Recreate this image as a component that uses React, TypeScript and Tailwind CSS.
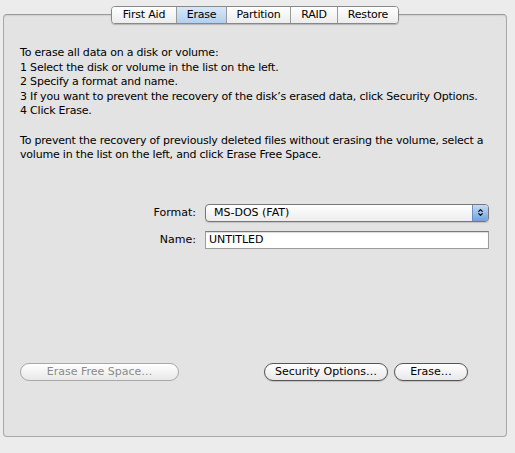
import { ChevronDown, ChevronUp } from "lucide-react";

const font = { fontFamily: '"DejaVu Sans", "Liberation Sans", sans-serif' };

function Tab({ label, active, first, w }: { label: string; active?: boolean; first?: boolean; w: string }) {
  return (
    <div
      className={`flex h-full items-center justify-center ${w} ${first ? "" : "border-l border-[#9a9a9a]"} ${
        active ? "bg-gradient-to-b from-[#d8e8f9] to-[#b3cfee] text-black" : "bg-gradient-to-b from-[#ffffff] to-[#ececec] text-black"
      }`}
    >
      {label}
    </div>
  );
}

function PillButton({ children, disabled, className }: { children: React.ReactNode; disabled?: boolean; className?: string }) {
  return (
    <div
      className={`flex h-[18px] items-center justify-center rounded-full border bg-gradient-to-b from-[#ffffff] to-[#e8e8e8] text-[11px] ${
        disabled ? "border-[#a8a8a8] text-[#8a8a8a] from-[#f4f4f4] to-[#e4e4e4]" : "border-[#555] text-black shadow-[0_1px_1px_rgba(0,0,0,0.15)]"
      } ${className ?? ""}`}
    >
      {children}
    </div>
  );
}

export default function App() {
  return (
    <div className="h-[453px] w-[515px] bg-[#ececec] pt-[14px] pl-[3px]" style={font}>
      <div className="relative flex h-[423px] w-[504px] flex-col rounded-[4px] border border-[#a9a9a9] border-t-[#999] bg-[#e3e3e3] shadow-[inset_0_1px_1px_rgba(0,0,0,0.08)]">
        {/* tab bar, sits across the top border */}
        <div className="absolute left-[107px] top-[-9px] flex h-[18px] overflow-hidden rounded-[4px] border border-[#888] text-[11px] tracking-[-0.2px] shadow-[0_1px_1px_rgba(0,0,0,0.2)]">
          <Tab label="First Aid" first w="w-[64px]" />
          <Tab label="Erase" active w="w-[50px]" />
          <Tab label="Partition" w="w-[64px]" />
          <Tab label="RAID" w="w-[47px]" />
          <Tab label="Restore" w="w-[61px]" />
        </div>

        <div className="pl-[16px] pt-[31px] text-[11px] leading-[14.6px] tracking-[-0.2px] text-black">
          <p>To erase all data on a disk or volume:</p>
          <p>1 Select the disk or volume in the list on the left.</p>
          <p>2 Specify a format and name.</p>
          <p>3 If you want to prevent the recovery of the disk’s erased data, click Security Options.</p>
          <p>4 Click Erase.</p>
          <p className="mt-[14.6px]">
            To prevent the recovery of previously deleted files without erasing the volume, select a
            <br />
            volume in the list on the left, and click Erase Free Space.
          </p>
        </div>

        <div className="mt-[41px] grid grid-cols-[192px_284px] items-center gap-x-[9px] gap-y-[9px] text-[11px]">
          <div className="text-right">Format:</div>
          <div className="flex h-[18px] items-center overflow-hidden rounded-[4px] border border-[#777] bg-gradient-to-b from-[#ffffff] to-[#ececec] shadow-[0_1px_1px_rgba(0,0,0,0.15)]">
            <span className="flex-1 pl-[8px]">MS-DOS (FAT)</span>
            <span className="flex h-full w-[16px] flex-col items-center justify-center border-l border-[#6c8fc0] bg-gradient-to-b from-[#c6dbf3] to-[#6ea2e0]">
              <ChevronUp className="-mb-[3px] h-[7px] w-[7px]" strokeWidth={4} />
              <ChevronDown className="h-[7px] w-[7px]" strokeWidth={4} />
            </span>
          </div>
          <div className="text-right">Name:</div>
          <div className="flex h-[18px] items-center border border-[#9c9c9c] border-t-[#7c7c7c] bg-white pl-[3px] shadow-[inset_0_1px_1px_rgba(0,0,0,0.15)]">
            UNTITLED
          </div>
        </div>

        <div className="mt-auto mb-[55px] flex items-center px-[16px]">
          <PillButton disabled className="w-[159px]">Erase Free Space…</PillButton>
          <div className="flex-1" />
          <PillButton className="w-[124px]">Security Options…</PillButton>
          <PillButton className="ml-[6px] w-[74px]">Erase…</PillButton>
          <div className="w-[22px]" />
        </div>
      </div>
    </div>
  );
}
